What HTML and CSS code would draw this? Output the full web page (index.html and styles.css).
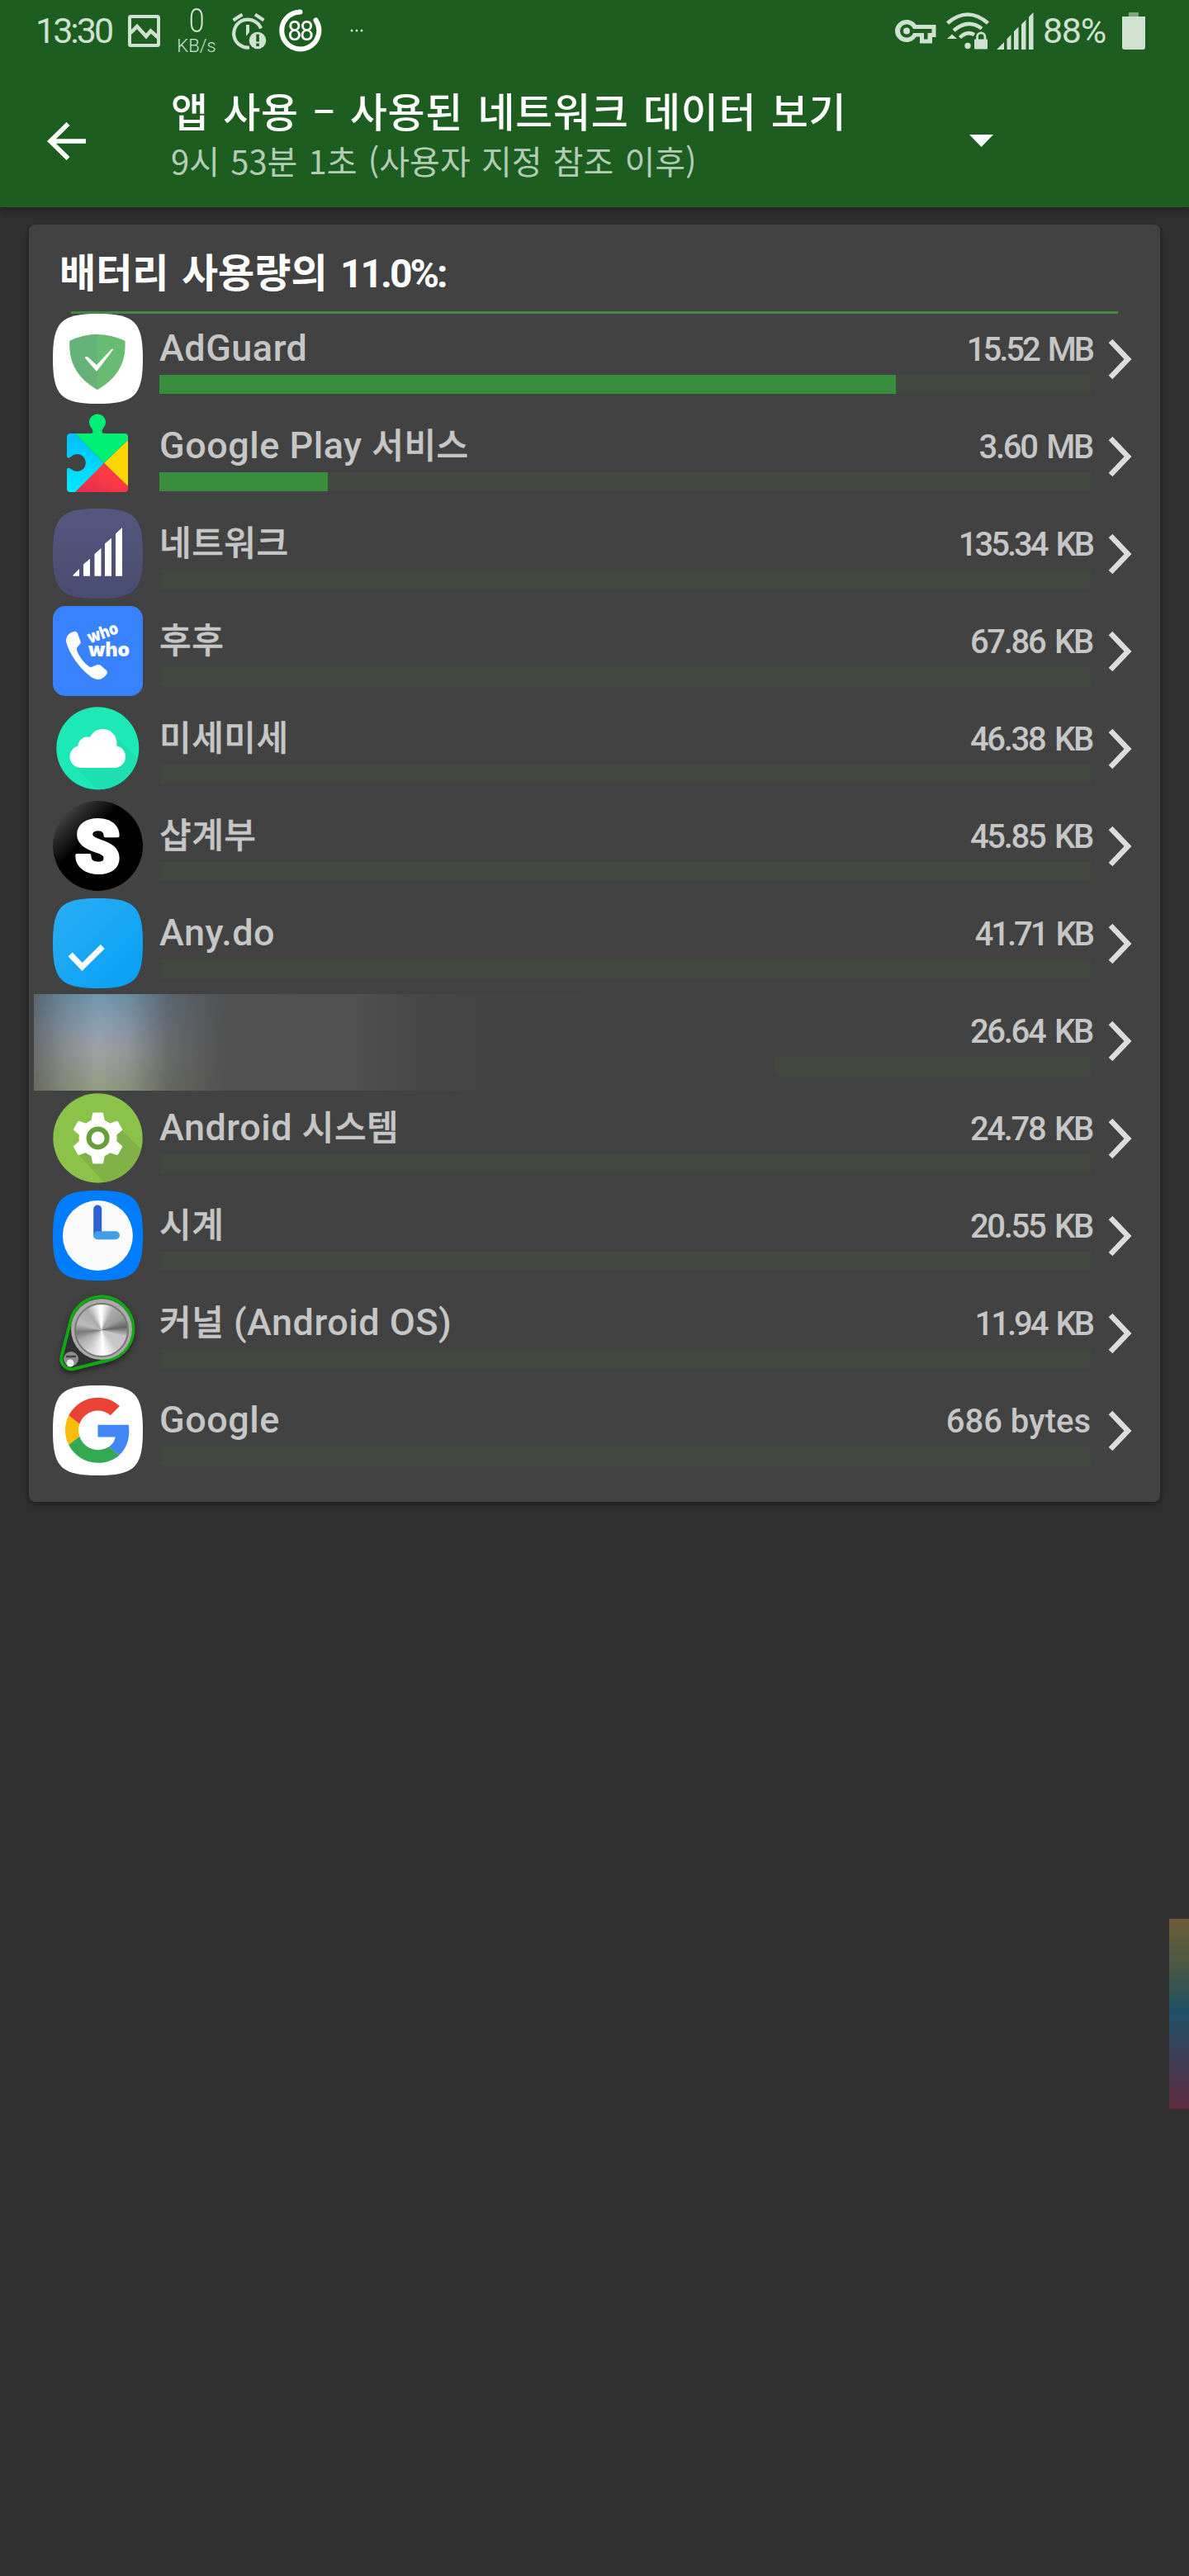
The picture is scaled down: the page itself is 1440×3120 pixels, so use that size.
FILE: index.html
```html
<!DOCTYPE html>
<html lang="ko">
<head>
<meta charset="utf-8">
<title>앱 사용</title>
<link rel="stylesheet" href="styles.css">
</head>
<body>
<header class="header">
  <div class="status">
    <span class="s-time">13:30</span>
    <svg class="s-image" viewBox="0 0 39 39"><rect x="2" y="2" width="35" height="35" rx="1.5" fill="none" stroke="currentColor" stroke-width="4"/><path d="M3 22L11 14 22 26 27.500 19.500 37 28" fill="none" stroke="currentColor" stroke-width="4.500"/></svg>
    <span class="s-speed"><span class="s-speed-n">0</span><span class="s-speed-u">KB/s</span></span>
    <svg class="s-alarm" viewBox="0 0 42 44"><g fill="none" stroke="currentColor"><path d="M1.500 8.500L12.500 1.500M28 1.500L38.500 8.500" stroke-width="4"/><path d="M35 18.500A17 17 0 1 0 21 41.500" stroke-width="4.200"/></g><path d="M17 14h4v9l-4 5z" fill="currentColor"/><circle cx="31" cy="33" r="10.300" fill="currentColor"/><path d="M29.300 25.500h3.600v9h-3.600zM29.300 36.500h3.600v3.500h-3.600z" fill="#1d5e20"/></svg>
    <span class="s-ring"><svg viewBox="0 0 52 52"><path d="M25.500 3.500A22.500 22.500 0 1 0 44.500 13.500" fill="none" stroke="#fff" stroke-width="6" stroke-linecap="round"/></svg><span class="s-ring-n">88</span></span>
    <svg class="s-dots" viewBox="0 0 16 4"><g fill="currentColor"><circle cx="2" cy="2" r="1.500"/><circle cx="8" cy="2" r="1.500"/><circle cx="14" cy="2" r="1.500"/></g></svg>
    <svg class="s-key" viewBox="0 0 50 30"><path d="M14 1C6.500 1 0 7 0 14.500S6.500 28 14 28c5 0 9-2.500 11.500-6.500H30V29.500H45V22H49.500V7H25.500C23 3.500 19 1 14 1z" fill="currentColor"/><path d="M14 6.500a8 8 0 1 0 0 16c4 0 7-2.500 8-5.500H35V24.500h4.500V17H44.500V12H22C21 9 18 6.500 14 6.500z" fill="#1d5e20"/><circle cx="14" cy="14.500" r="4" fill="currentColor"/></svg>
    <svg class="s-wifi" viewBox="0 0 52 45"><g fill="none" stroke="currentColor" stroke-width="4.500"><path d="M1.500 13Q26 -8 50.500 13"/><path d="M9 22Q26 7 43 19.500"/><path d="M16.500 30.500Q25 22 34 27"/></g><circle cx="26" cy="40.500" r="3.700" fill="currentColor"/><path d="M1 32L7 26.500 13 32z" fill="currentColor"/><rect x="34" y="32.500" width="16" height="12" rx="1" fill="currentColor"/><path d="M37.500 33V29.500a4.700 4.700 0 0 1 9.400 0V33" fill="none" stroke="currentColor" stroke-width="2.800"/></svg>
    <svg class="s-signal" viewBox="0 0 45 45"><path d="M0 45L9 36V45zM12.500 45V32L17.500 27V45zM21 45V23L26.500 17.500V45zM30 45V14.500L35.500 9V45zM39 45V5.500L44.500 0V45z" fill="currentColor"/></svg>
    <span class="s-pct">88%</span>
    <svg class="s-batt" viewBox="0 0 28 45"><rect x="8" width="12" height="6" fill="currentColor" opacity=".55"/><path d="M0 5H28V42q0 3-3 3H3q-3 0-3-3z" fill="currentColor"/></svg>
  </div>
  <div class="toolbar">
    <svg class="back" viewBox="0 0 48 46"><path d="M47 23H5M25.500 2L4 23 25.500 44" fill="none" stroke="#fff" stroke-width="5.600"/></svg>
    <div class="titles">
      <h1 class="title">앱 사용 – 사용된 네트워크 데이터 보기</h1>
      <p class="subtitle">9시 53분 1초 (사용자 지정 참조 이후)</p>
    </div>
    <svg class="drop" viewBox="0 0 29 15"><path d="M0 0H29L14.500 15z" fill="#fff"/></svg>
  </div>
</header>

<main class="card">
  <h2 class="heading">배터리 사용량의 <span class="heading-n">11.0%:</span></h2>
  <div class="rule"></div>
  <ul class="list">
    <li class="row">
      <svg class="icon" viewBox="0 0 109 109"><path d="M54.500 0C99 0 109 10 109 54.500S99 109 54.500 109 0 99 0 54.500 10 0 54.500 0Z" fill="#fff"/><path d="M20.500 33Q54 17 87.500 33C89 62 76 79 54 92C32 79 19 62 20.500 33Z" fill="#68bc71"/><path d="M20.500 33Q37 25 54 25V92C32 79 19 62 20.500 33Z" fill="#67b279"/><path d="M38.500 53Q41 51 43 53L53 62 69 45Q71 42 73.500 43L53 70Z" fill="#fff"/></svg>
      <div class="body"><div class="line"><span class="name">AdGuard</span><span class="value ones">15.52 MB</span></div><div class="track"><div class="fill" style="width:79.1%"></div></div></div>
      <svg class="chev" viewBox="0 0 30 52"><path d="M4 4L25 26 4 48"/></svg>
    </li>
    <li class="row">
      <svg class="icon" viewBox="0 0 109 109"><defs><linearGradient id="cy" x1="0" y1="0" x2="0" y2="1"><stop offset="0" stop-color="#00baff"/><stop offset="1" stop-color="#00e9ff"/></linearGradient><linearGradient id="rd" x1="0" y1="1" x2="1" y2="0"><stop offset="0" stop-color="#e02a50"/><stop offset=".6" stop-color="#ff3a44"/></linearGradient><clipPath id="pz"><path d="M21 27H46C50 27 48.500 22.500 46.500 20A10 10 0 1 1 61.500 20C59.500 22.500 58 27 62 27H87q4 0 4 4V94q0 4-4 4H21q-4 0-4-4V71Q17 67 22 70A10.500 10.500 0 1 0 22 55Q17 59 17 54V31q0-4 4-4z"/></clipPath></defs><g clip-path="url(#pz)"><path d="M17 20V98H30L62 63 27 27z" fill="url(#cy)"/><path d="M27 27V0H91V35L62 63z" fill="#00f076"/><path d="M91 35V91L62 63z" fill="#ffd500"/><path d="M91 91V98H27L62 63z" fill="url(#rd)"/></g></svg>
      <div class="body"><div class="line"><span class="name">Google Play <span class="ko">서비스</span></span><span class="value">3.60 MB</span></div><div class="track"><div class="fill" style="width:18.1%"></div></div></div>
      <svg class="chev" viewBox="0 0 30 52"><path d="M4 4L25 26 4 48"/></svg>
    </li>
    <li class="row">
      <svg class="icon" viewBox="0 0 109 109"><defs><linearGradient id="nt" x1="0" y1="0" x2="0" y2="1"><stop offset="0" stop-color="#55577f"/><stop offset="1" stop-color="#4a4b70"/></linearGradient></defs><path d="M54.500 0C99 0 109 10 109 54.500S99 109 54.500 109 0 99 0 54.500 10 0 54.500 0Z" fill="url(#nt)"/><path d="M24.500 81.700V80.500L32 73V81.700zM37 81.700V67.500L45 60.700V81.700zM50.500 81.700V55L58.500 48V81.700zM63 81.700V42.500L71 35.700V81.700zM76 81.700V30.500L84 23V81.700z" fill="#fff"/></svg>
      <div class="body"><div class="line"><span class="name"><span class="ko">네트워크</span></span><span class="value ones">135.34 KB</span></div><div class="track"></div></div>
      <svg class="chev" viewBox="0 0 30 52"><path d="M4 4L25 26 4 48"/></svg>
    </li>
    <li class="row">
      <svg class="icon" viewBox="0 0 109 109"><rect width="109" height="109" rx="15" fill="#3882ff"/><path d="M24 31.500Q28 29.500 30 33L33.500 43Q34.500 45 32 47L29.500 50Q28 52 29.500 55C33 63 39 70 44 73.500Q46 74.500 49 73L54 71Q56.500 70.500 58 72L65 78Q67 81 64.500 83.500 60 89 54 89 48 88 44 84C31 74 19 56 16 43 16 36 20 32.500 24 31.500Z" fill="#fff"/><text class="who" x="45" y="45.500" font-size="21" transform="rotate(-20 45 45.500)" textLength="38" lengthAdjust="spacingAndGlyphs">who</text><text class="who" x="43" y="60.500" font-size="24" textLength="50" lengthAdjust="spacingAndGlyphs">who</text></svg>
      <div class="body"><div class="line"><span class="name"><span class="ko">후후</span></span><span class="value">67.86 KB</span></div><div class="track"></div></div>
      <svg class="chev" viewBox="0 0 30 52"><path d="M4 4L25 26 4 48"/></svg>
    </li>
    <li class="row">
      <svg class="icon" viewBox="0 0 109 109"><defs><clipPath id="cc"><circle cx="54.300" cy="54.300" r="50"/></clipPath></defs><circle cx="54.500" cy="55.500" r="50" fill="#2c5a4e"/><circle cx="54.300" cy="54.300" r="50" fill="#1de9b6"/><path d="M72 36L115 79V115H64L27 76z" fill="#1edfb0" clip-path="url(#cc)"/><g fill="#fff"><circle cx="34" cy="64.500" r="13.500"/><circle cx="74.500" cy="64.500" r="13.500"/><circle cx="60.500" cy="48" r="17"/><circle cx="42" cy="52" r="11.500"/><path d="M34 50H75V78H34z"/></g></svg>
      <div class="body"><div class="line"><span class="name"><span class="ko">미세미세</span></span><span class="value">46.38 KB</span></div><div class="track"></div></div>
      <svg class="chev" viewBox="0 0 30 52"><path d="M4 4L25 26 4 48"/></svg>
    </li>
    <li class="row">
      <svg class="icon" viewBox="0 0 109 109"><defs><linearGradient id="sg" x1=".1" y1=".1" x2=".4" y2=".4"><stop offset="0" stop-color="#4a4a4a"/><stop offset="1" stop-color="#000"/></linearGradient></defs><circle cx="54.500" cy="54.500" r="54.500" fill="url(#sg)"/><text class="big-s" x="54" y="86" text-anchor="middle">S</text></svg>
      <div class="body"><div class="line"><span class="name"><span class="ko">샵계부</span></span><span class="value">45.85 KB</span></div><div class="track"></div></div>
      <svg class="chev" viewBox="0 0 30 52"><path d="M4 4L25 26 4 48"/></svg>
    </li>
    <li class="row">
      <svg class="icon" viewBox="0 0 109 109"><defs><linearGradient id="an" x1="0" y1="0" x2="1" y2="1"><stop offset="0" stop-color="#2aaef7"/><stop offset="1" stop-color="#069ff2"/></linearGradient></defs><path d="M54.500 0C99 0 109 10 109 54.500S99 109 54.500 109 0 99 0 54.500 10 0 54.500 0Z" fill="url(#an)"/><path d="M21.200 68L35.500 83 60.300 58.500" fill="none" stroke="#fff" stroke-width="7"/></svg>
      <div class="body"><div class="line"><span class="name">Any.do</span><span class="value ones">41.71 KB</span></div><div class="track"></div></div>
      <svg class="chev" viewBox="0 0 30 52"><path d="M4 4L25 26 4 48"/></svg>
    </li>
    <li class="row">
      <div class="icon"></div>
      <div class="body"><div class="line"><span class="name">&nbsp;</span><span class="value">26.64 KB</span></div><div class="track"></div></div>
      <svg class="chev" viewBox="0 0 30 52"><path d="M4 4L25 26 4 48"/></svg>
      <div class="veil"><div class="veil-tint"></div></div>
    </li>
    <li class="row">
      <svg class="icon" viewBox="0 0 109 109"><defs><clipPath id="gc"><circle cx="54.500" cy="54.500" r="54"/></clipPath></defs><circle cx="54.500" cy="54.500" r="54.200" fill="#8bc34a"/><path d="M83 44L125 86V115H68L32 75z" fill="#80b248" clip-path="url(#gc)"/><g fill="#fff" transform="translate(54.600 54.400)"><circle r="23"/><path id="tooth" d="M-10 -18L-8 -22 -6.500 -30Q-6 -31 -5 -31H5Q6 -31 6.500 -30L8 -22 10 -18z"/><use href="#tooth" transform="rotate(60)"/><use href="#tooth" transform="rotate(120)"/><use href="#tooth" transform="rotate(180)"/><use href="#tooth" transform="rotate(240)"/><use href="#tooth" transform="rotate(300)"/><circle r="11" stroke="#689f38" stroke-width="6"/></g></svg>
      <div class="body"><div class="line"><span class="name">Android <span class="ko">시스템</span></span><span class="value">24.78 KB</span></div><div class="track"></div></div>
      <svg class="chev" viewBox="0 0 30 52"><path d="M4 4L25 26 4 48"/></svg>
    </li>
    <li class="row">
      <svg class="icon" viewBox="0 0 109 109"><path d="M54.500 0C99 0 109 10 109 54.500S99 109 54.500 109 0 99 0 54.500 10 0 54.500 0Z" fill="#007dff"/><circle cx="54.400" cy="54.400" r="42.500" fill="#fafafa"/><g fill="none" stroke-width="10" stroke-linecap="round"><path d="M54.200 22.500V54" stroke="#2a62d3"/><path d="M54.200 54.200H76" stroke="#429ee5"/></g></svg>
      <div class="body"><div class="line"><span class="name"><span class="ko">시계</span></span><span class="value">20.55 KB</span></div><div class="track"></div></div>
      <svg class="chev" viewBox="0 0 30 52"><path d="M4 4L25 26 4 48"/></svg>
    </li>
    <li class="row">
      <div class="icon kernel"><svg viewBox="0 0 109 109"><path d="M61 10.500A39 39 0 0 1 67 87.500L25 98A12.500 12.500 0 0 1 10.500 83L21.500 40A39 39 0 0 1 61 10.500Z" fill="#303030" stroke="#12a812" stroke-width="4"/><circle cx="22" cy="86" r="9" fill="#8d8d8d"/><circle cx="21" cy="91" r="4.500" fill="#eee"/><path d="M16 83H28" stroke="#444" stroke-width="2.500"/><circle cx="59" cy="50" r="37" fill="#aaa"/></svg><div class="disc"></div></div>
      <div class="body"><div class="line"><span class="name"><span class="ko">커널</span> (Android OS)</span><span class="value ones">11.94 KB</span></div><div class="track"></div></div>
      <svg class="chev" viewBox="0 0 30 52"><path d="M4 4L25 26 4 48"/></svg>
    </li>
    <li class="row">
      <svg class="icon" viewBox="0 0 109 109"><path d="M54.500 0C99 0 109 10 109 54.500S99 109 54.500 109 0 99 0 54.500 10 0 54.500 0Z" fill="#fff"/><g transform="translate(15 14.800) scale(1.646)"><path fill="#ea4335" d="M24 9.500c3.540 0 6.710 1.220 9.210 3.600l6.850-6.850C35.900 2.380 30.470 0 24 0 14.620 0 6.510 5.380 2.560 13.220l7.980 6.190C12.430 13.720 17.740 9.500 24 9.500z"/><path fill="#4285f4" d="M46.980 24.550c0-1.570-.15-3.090-.38-4.550H24v9.020h12.940c-.58 2.960-2.260 5.480-4.780 7.180l7.730 6c4.510-4.180 7.090-10.360 7.090-17.650z"/><path fill="#fbbc05" d="M10.530 28.590c-.48-1.450-.76-2.990-.76-4.590s.27-3.140.76-4.590l-7.980-6.190C.92 16.460 0 20.120 0 24c0 3.880.92 7.540 2.560 10.780l7.970-6.190z"/><path fill="#34a853" d="M24 48c6.480 0 11.930-2.130 15.890-5.810l-7.730-6c-2.150 1.450-4.920 2.300-8.160 2.300-6.260 0-11.570-4.220-13.470-9.910l-7.980 6.190C6.510 42.620 14.620 48 24 48z"/></g></svg>
      <div class="body"><div class="line"><span class="name">Google</span><span class="value bytes">686 bytes</span></div><div class="track"></div></div>
      <svg class="chev" viewBox="0 0 30 52"><path d="M4 4L25 26 4 48"/></svg>
    </li>
  </ul>
</main>
<div class="edge"></div>
</body>
</html>
```
FILE: styles.css
```css
* { box-sizing: border-box; margin: 0; padding: 0; }
body { width: 1440px; height: 3120px; background: #303030; font-family: Roboto, "Noto Sans CJK KR", sans-serif; overflow: hidden; position: relative; }
svg { display: block; flex: none; }

.header { height: 251px; background: #1d5e20; box-shadow: 0 4px 10px rgba(0,0,0,.35); }
.status { height: 75px; display: flex; align-items: flex-start; padding-left: 43px; color: #d0e0d1; white-space: nowrap; }
.s-time { width: 112px; font-size: 43px; line-height: 74px; letter-spacing: -3px; }
.s-image { width: 39px; height: 39px; margin-top: 18px; }
.s-speed { width: 60px; margin-left: 14px; padding-top: 6px; display: flex; flex-direction: column; align-items: center; font-weight: 300; }
.s-speed-n { font-size: 40px; line-height: 40px; height: 38px; transform: scaleX(.85); }
.s-speed-u { font-size: 22px; line-height: 24px; }
.s-alarm { width: 42px; height: 44px; margin: 16px 0 0 13px; }
.s-ring { width: 52px; height: 52px; margin: 11px 0 0 15px; position: relative; color: #fff; }
.s-ring-n { position: absolute; inset: 0; text-align: center; font-size: 33px; line-height: 53px; letter-spacing: -2.6px; text-indent: -2px; font-weight: 400; transform: scaleX(.93); }
.s-dots { width: 16px; height: 4px; margin: 35px 0 0 34px; }
.s-key { width: 50px; height: 30px; margin: 23px 0 0 644px; }
.s-wifi { width: 52px; height: 45px; margin: 15px 0 0 12px; }
.s-signal { width: 45px; height: 45px; margin: 15px 0 0 9px; }
.s-pct { width: 92px; margin-left: 11px; font-size: 43px; line-height: 74px; letter-spacing: -1.3px; }
.s-batt { width: 28px; height: 45px; margin: 15px 0 0 4px; }

.toolbar { height: 176px; display: flex; align-items: flex-start; }
.back { width: 48px; height: 46px; margin: 73px 0 0 57px; }
.titles { width: 900px; margin-left: 102px; padding-top: 29px; font-family: "Noto Sans CJK KR", sans-serif; white-space: nowrap; }
.title { height: 60px; line-height: 58px; font-size: 49px; font-weight: 500; letter-spacing: .7px; word-spacing: 3px; color: #fff; }
.subtitle { height: 60px; line-height: 60px; font-size: 40px; word-spacing: 2px; color: #b4cbb5; }
.drop { width: 29px; height: 15px; margin: 88px 0 0 67px; }

.card { width: 1370px; height: 1547px; margin: 21px 0 0 35px; border-radius: 8px; background: #424242; box-shadow: 0 3px 8px rgba(0,0,0,.4); }
.heading { height: 105px; padding-left: 37px; font-family: "Noto Sans CJK KR", sans-serif; font-size: 48px; font-weight: 700; line-height: 110px; word-spacing: 2px; color: #fff; white-space: nowrap; }
.heading-n { font-family: Roboto, sans-serif; letter-spacing: -3px; }
.rule { height: 3px; width: 1268px; margin-left: 51px; background: #3e8a41; }
.list { list-style: none; display: flex; flex-direction: column; gap: 9px; padding-left: 29px; }
.row { height: 109px; display: flex; align-items: center; position: relative; }
.icon { width: 109px; height: 109px; flex: none; }
.body { width: 1128px; height: 109px; margin-left: 20px; }
.line { height: 74px; padding-top: 14px; display: flex; align-items: baseline; justify-content: space-between; color: #c6c6c6; line-height: 56px; white-space: nowrap; }
.name { font-size: 45px; font-weight: 500; letter-spacing: .5px; }
.ko { font-family: "Noto Sans CJK KR", sans-serif; font-size: 42px; line-height: 0; -webkit-text-stroke: .5px #c6c6c6; }
.value { font-size: 40px; font-weight: 500; letter-spacing: -2.3px; word-spacing: 4px; margin-right: -2px; }
.ones { letter-spacing: -3px; }
.bytes { letter-spacing: 0; word-spacing: 0; margin-right: 0; }
.track { height: 23px; background: #424740; }
.fill { height: 23px; background: #388e3c; }
.chev { width: 30px; height: 52px; margin-left: 20px; fill: none; stroke: #dcdcdc; stroke-width: 6.500px; }

.who { font-family: Inter, Roboto, sans-serif; font-weight: 900; fill: #fff; }
.big-s { font-family: Roboto, sans-serif; font-weight: 900; font-size: 88px; fill: #fff; stroke: #fff; stroke-width: 4px; stroke-linejoin: round; }

.kernel { position: relative; filter: drop-shadow(0 3px 3px rgba(0,0,0,.5)); }
.disc { position: absolute; left: 26px; top: 18px; width: 66px; height: 66px; border-radius: 50%; border: 2px solid #777; background: conic-gradient(#fff 0deg, #aaa 30deg, #999 60deg, #666 83deg, #c4c4c4 105deg, #c8c8c8 140deg, #fff 175deg, #ddd 200deg, #aaa 245deg, #777 265deg, #bbb 285deg, #aaa 325deg, #fff 355deg); }

.veil { position: absolute; left: -23px; top: -2px; width: 898px; height: 117px; background: linear-gradient(90deg, #484848 0, #515151 27%, #505050 43%, #464646 53%, #434343 60%, #424242 100%); }
.veil-tint { width: 300px; height: 117px; background: linear-gradient(180deg, #7098b0 0, #8fa0b2 35%, #9ea2a3 60%, #939c82 100%); -webkit-mask-image: linear-gradient(90deg, rgba(0,0,0,.4) 0, rgba(0,0,0,.75) 12%, #000 26%, rgba(0,0,0,.85) 38%, rgba(0,0,0,.35) 54%, transparent 78%); mask-image: linear-gradient(90deg, rgba(0,0,0,.4) 0, rgba(0,0,0,.75) 12%, #000 26%, rgba(0,0,0,.85) 38%, rgba(0,0,0,.35) 54%, transparent 78%); }

.edge { position: absolute; left: 1416px; top: 2324px; width: 24px; height: 230px; background: linear-gradient(180deg, #6d5c36 0, #4a5844 25%, #1f5065 49%, #3f3d55 75%, #602b3f 100%); }
```
